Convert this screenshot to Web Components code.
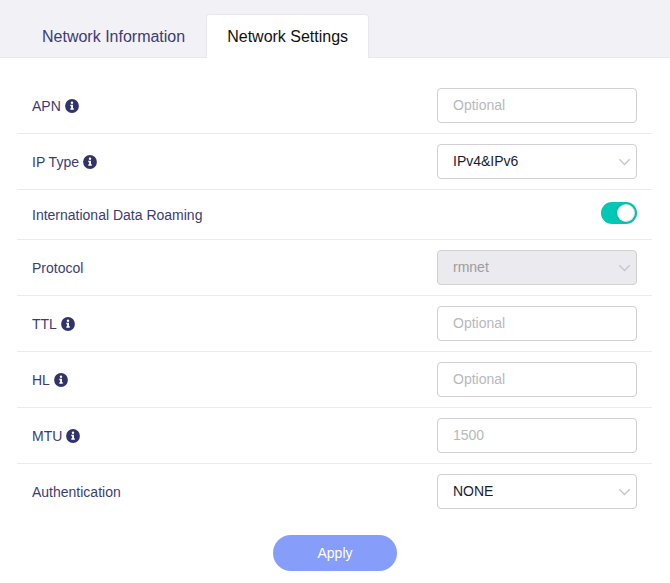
<!DOCTYPE html>
<html lang="en">
<head>
<meta charset="utf-8">
<meta name="viewport" content="width=device-width, initial-scale=1">
<title>Network Settings</title>
<style>
  body {
    margin: 0;
    background: #ffffff;
    color: #3c3c72;
    font-family: "Liberation Sans", Arial, sans-serif;
    font-size: 14px;
    line-height: 20px;
  }
</style>
</head>
<body>
<network-page></network-page>

<script>
class TabBar extends HTMLElement {
  constructor() {
    super();
    this.attachShadow({ mode: 'open' }).innerHTML = `
      <style>
      :host {
        background: #f2f1f6;
        border-bottom: 1px solid #e8e7ee;
        display: block;
        padding: 14px 21px 0;
      }

      .tabs {
        display: flex;
        margin-bottom: -1px;
      }
      </style>
      <div class="tabs" role="tablist"><slot></slot></div>
    `;
  }
}

class TabItem extends HTMLElement {
  connectedCallback() {
    const active = this.hasAttribute('active');
    this.attachShadow({ mode: 'open' }).innerHTML = `
      <style>
      :host {
        display: block;
      }

      button {
        background: none;
        border: 1px solid transparent;
        border-bottom: none;
        border-radius: 4px 4px 0 0;
        color: #3c3c72;
        cursor: pointer;
        display: block;
        font: inherit;
        font-size: 16px;
        line-height: 24px;
        padding: 10px 20px 9px;
      }

      button[aria-selected="true"] {
        background: #ffffff;
        border-color: #e8e7ee;
        color: #111111;
      }
      </style>
      <button type="button" role="tab" aria-selected="${active}"><slot></slot></button>
    `;
  }
}

class InfoIcon extends HTMLElement {
  constructor() {
    super();
    this.attachShadow({ mode: 'open' }).innerHTML = `
      <style>
      :host {
        display: inline-flex;
      }
      </style>
      <svg width="14" height="14" viewBox="0 0 14 14" aria-hidden="true">
        <circle cx="7" cy="7" r="6.9" fill="#33336b"/>
        <circle cx="7" cy="3.8" r="1.2" fill="#fff"/>
        <path d="M5.3 5.8h2.7v3.5h.8v1.4H5.3V9.3h.8V7.2h-.8z" fill="#fff"/>
      </svg>
    `;
  }
}

const rowStyle = `
  :host {
    border-bottom: 1px solid #ebebeb;
    display: block;
  }

  :host(:last-child) {
    border-bottom: none;
  }

  .row {
    align-items: center;
    display: flex;
    justify-content: space-between;
    padding: 10px 15px;
  }

  label {
    align-items: center;
    display: flex;
    gap: 4px;
  }

  .field {
    border: 1px solid #cfcfd4;
    border-radius: 4px;
    box-sizing: border-box;
    color: #1c1a33;
    font: inherit;
    height: 35px;
    padding: 0 15px 2px;
    width: 200px;
  }
`;

// label on the left, control on the right
class SettingRow extends HTMLElement {
  connectedCallback() {
    this.attachShadow({ mode: 'open' }).innerHTML = `
      <style>${rowStyle}${this.controlStyle()}</style>
      <div class="row">
        <label for="control">${this.getAttribute('label')}${this.hasAttribute('info') ? '<info-icon></info-icon>' : ''}</label>
        ${this.control()}
      </div>
    `;
  }

  controlStyle() {
    return '';
  }

  control() {
    return '<slot></slot>';
  }
}

class TextSetting extends SettingRow {
  controlStyle() {
    return `
      .field {
        background: #ffffff;
      }

      .field::placeholder {
        color: #b8b8bc;
        opacity: 1;
      }
    `;
  }

  control() {
    return `<input id="control" class="field" type="text" placeholder="${this.getAttribute('placeholder')}">`;
  }
}

class SelectSetting extends SettingRow {
  controlStyle() {
    return `
      .select {
        position: relative;
      }

      select {
        appearance: none;
        background: #ffffff;
        display: block;
      }

      select:disabled {
        background: #ebeaef;
        color: #9c9ca0;
        opacity: 1;
      }

      svg {
        pointer-events: none;
        position: absolute;
        right: 6px;
        top: 14px;
      }
    `;
  }

  control() {
    const options = this.getAttribute('options').split(',');
    return `
      <div class="select">
        <select id="control" class="field" ${this.hasAttribute('disabled') ? 'disabled' : ''}>
          ${options.map(option => `<option>${option.replace('&', '&amp;')}</option>`).join('')}
        </select>
        <svg width="13" height="8" viewBox="0 0 13 8" fill="none" stroke="#c3c6ce" stroke-width="1.3" aria-hidden="true">
          <path d="M1.3 1.3l5.2 5.2 5.2-5.2"/>
        </svg>
      </div>
    `;
  }
}

class SwitchSetting extends SettingRow {
  controlStyle() {
    return `
      .row {
        align-items: flex-start;
        padding: 12px 15px 13px;
      }

      label {
        padding: 3px 0 1px;
      }

      input {
        appearance: none;
        background: #c8c8d0;
        border-radius: 11px;
        box-sizing: border-box;
        cursor: pointer;
        display: flex;
        height: 22px;
        margin: 0;
        padding: 2px;
        width: 36px;
      }

      input::before {
        background: #ffffff;
        border-radius: 50%;
        box-shadow: 0 0 2px rgba(0, 0, 0, 0.2), inset 0 0 2px rgba(0, 0, 0, 0.3);
        content: "";
        height: 18px;
        width: 18px;
      }

      input:checked {
        background: #00c8b4;
        justify-content: flex-end;
      }
    `;
  }

  control() {
    return `<input id="control" type="checkbox" role="switch" ${this.hasAttribute('checked') ? 'checked' : ''}>`;
  }
}

class PillButton extends HTMLElement {
  constructor() {
    super();
    this.attachShadow({ mode: 'open' }).innerHTML = `
      <style>
      :host {
        display: block;
      }

      button {
        background: #869df9;
        border: none;
        border-radius: 18px;
        color: #ffffff;
        cursor: pointer;
        display: block;
        font: inherit;
        height: 36px;
        min-width: 124px;
        padding: 0 24px;
      }
      </style>
      <button type="button"><slot></slot></button>
    `;
  }
}

class NetworkPage extends HTMLElement {
  constructor() {
    super();
    this.attachShadow({ mode: 'open' }).innerHTML = `
      <style>
      :host {
        display: block;
      }

      .settings {
        padding: 20px 18px 0 17px;
      }

      .actions {
        display: flex;
        justify-content: center;
        padding: 16px 0 12px;
      }
      </style>

      <tab-bar>
        <tab-item>Network Information</tab-item>
        <tab-item active>Network Settings</tab-item>
      </tab-bar>
      <main>
        <div class="settings">
          <text-setting label="APN" info placeholder="Optional"></text-setting>
          <select-setting label="IP Type" info options="IPv4&amp;IPv6,IPv4,IPv6"></select-setting>
          <switch-setting label="International Data Roaming" checked></switch-setting>
          <select-setting label="Protocol" options="rmnet" disabled></select-setting>
          <text-setting label="TTL" info placeholder="Optional"></text-setting>
          <text-setting label="HL" info placeholder="Optional"></text-setting>
          <text-setting label="MTU" info placeholder="1500"></text-setting>
          <select-setting label="Authentication" options="NONE,PAP,CHAP"></select-setting>
        </div>
        <div class="actions">
          <pill-button>Apply</pill-button>
        </div>
      </main>
    `;
  }
}

window.customElements.define('tab-bar', TabBar);
window.customElements.define('tab-item', TabItem);
window.customElements.define('info-icon', InfoIcon);
window.customElements.define('text-setting', TextSetting);
window.customElements.define('select-setting', SelectSetting);
window.customElements.define('switch-setting', SwitchSetting);
window.customElements.define('pill-button', PillButton);
window.customElements.define('network-page', NetworkPage);
</script>
</body>
</html>
